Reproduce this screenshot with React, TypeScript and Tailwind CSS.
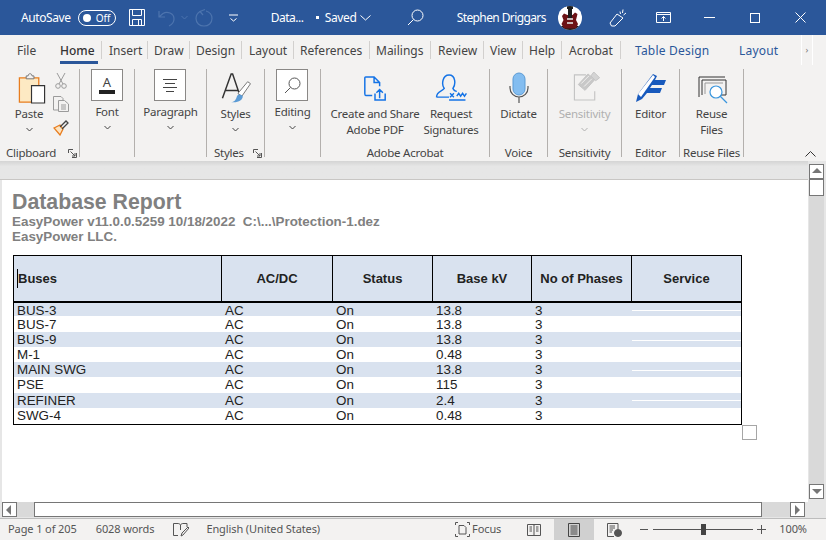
import type { ReactNode } from 'react';

const TABS = [
  { label: 'File', cls: 'w-[60px] pl-[17px] text-[#444]', sep: false },
  { label: 'Home', cls: 'w-[42px] text-[#333] font-medium', sep: true, active: true },
  { label: 'Insert', cls: 'w-[46px] pl-[7px] text-[#444]', sep: true },
  { label: 'Draw', cls: 'w-[42px] pl-[6px] text-[#444]', sep: true },
  { label: 'Design', cls: 'w-[52px] pl-[6px] text-[#444]', sep: true },
  { label: 'Layout', cls: 'w-[52px] pl-[7px] text-[#444]', sep: true },
  { label: 'References', cls: 'w-[76px] pl-[6px] text-[#444]', sep: true },
  { label: 'Mailings', cls: 'w-[61px] pl-[6px] text-[#444]', sep: true },
  { label: 'Review', cls: 'w-[53px] pl-[7px] text-[#444]', sep: true },
  { label: 'View', cls: 'w-[39px] pl-[6px] text-[#444]', sep: true },
  { label: 'Help', cls: 'w-[39px] pl-[6px] text-[#444]', sep: true },
  { label: 'Acrobat', cls: 'w-[59px] pl-[7px] text-[#444]', sep: true },
];

// row heights in the shot aren't even, word rounds them
const ROWS = [
  { cells: ['BUS-3', 'AC', 'On', '13.8', '3'], cls: 'h-[13px] leading-[15px] bg-[#d9e2ef]', band: true },
  { cells: ['BUS-7', 'AC', 'On', '13.8', '3'], cls: 'h-[16px] leading-[17px] bg-white', band: false },
  { cells: ['BUS-9', 'AC', 'On', '13.8', '3'], cls: 'h-[15px] leading-[16px] bg-[#d9e2ef]', band: true },
  { cells: ['M-1', 'AC', 'On', '0.48', '3'], cls: 'h-[15px] leading-[16px] bg-white', band: false },
  { cells: ['MAIN SWG', 'AC', 'On', '13.8', '3'], cls: 'h-[15px] leading-[16px] bg-[#d9e2ef]', band: true },
  { cells: ['PSE', 'AC', 'On', '115', '3'], cls: 'h-[16px] leading-[16px] bg-white', band: false },
  { cells: ['REFINER', 'AC', 'On', '2.4', '3'], cls: 'h-[15px] leading-[15px] bg-[#d9e2ef]', band: true },
  { cells: ['SWG-4', 'AC', 'On', '0.48', '3'], cls: 'h-[16px] leading-[16px] bg-white', band: false },
];

function Group({
  label,
  launcher,
  className,
  labelClass,
  children,
}: {
  label: string;
  launcher?: boolean;
  className: string;
  labelClass?: string;
  children: ReactNode;
}) {
  return (
    <div className={`flex h-[88px] flex-col border-r border-[#b3b0ad] ${className}`}>
      <div className="flex flex-1 justify-center">{children}</div>
      <div
        className={`flex h-[8px] items-center justify-center text-[11.5px] leading-[8px] tracking-[-0.25px] text-[#444] ${labelClass ?? ''}`}
      >
        <span>{label}</span>
        {launcher ? (
          <svg width="9" height="9" viewBox="0 0 9 9" className="ml-auto mr-[2px]" fill="none" stroke="#555">
            <path d="M8.5 4V8.5H4M.5 4V.5H5M2.5 2.5L7 7M7 4V7H4" />
          </svg>
        ) : null}
      </div>
    </div>
  );
}

function Chevron({ color = '#444' }: { color?: string }) {
  return (
    <svg width="7" height="5" viewBox="0 0 7 5" fill="none" stroke={color} strokeWidth="1">
      <path d="M.5 1L3.5 4L6.5 1" />
    </svg>
  );
}

function Label({ children, className }: { children: ReactNode; className?: string }) {
  return (
    <div className={`whitespace-nowrap text-[11.5px] leading-[16px] tracking-[-0.25px] ${className ?? 'text-[#444]'}`}>
      {children}
    </div>
  );
}

function BoxButton({ label, children }: { label: string; children: ReactNode }) {
  return (
    <div className="flex flex-col items-center">
      <div className="flex h-[32px] w-[32px] items-center justify-center border border-[#8a8886] bg-white">
        {children}
      </div>
      <div className="mt-[3px]">
        <Label>{label}</Label>
      </div>
      <div className="mt-[5px]">
        <Chevron />
      </div>
    </div>
  );
}

function ScrollBtn({ dir }: { dir: 'up' | 'down' | 'left' | 'right' }) {
  const path = {
    up: 'M0 6L5 1L10 6Z',
    down: 'M0 2H10L5 7Z',
    left: 'M6 0V10L1 5Z',
    right: 'M2 0V10L7 5Z',
  }[dir];
  return (
    <div className="flex h-[15px] w-[15px] items-center justify-center border border-[#767676] bg-white">
      <svg width="10" height="10" viewBox="0 0 10 10" fill="#767676">
        <path d={path} />
      </svg>
    </div>
  );
}

export default function App() {
  return (
    <div className="flex h-[540px] w-[826px] flex-col overflow-hidden bg-[#e6e6e6] font-['Noto_Sans',sans-serif]">
      {/* title bar */}
      <header className="flex h-[35px] shrink-0 items-center bg-[#2b579a] text-white">
        <span className="ml-[21px] text-[12px] tracking-[-0.4px]">AutoSave</span>
        <div className="ml-[7px] flex h-[16px] w-[38px] items-center rounded-full border border-white pl-[4px]">
          <span className="h-[8px] w-[8px] rounded-full bg-white" />
          <span className="ml-[5px] text-[10px] leading-none">Off</span>
        </div>
        <svg width="16" height="17" viewBox="0 0 16 17" fill="none" stroke="#fff" className="ml-[13px]">
          <path d="M.5.5H15.5V16.5H.5ZM3.5.5V6.5H12.5V.5M3.5 16.5V10.5H12.5V16.5M9.5 11V16" />
        </svg>
        <svg width="18" height="18" viewBox="0 0 18 18" fill="none" stroke="#4d74ae" strokeWidth="1.2" className="ml-[13px]">
          <path d="M1 2V8H7M1.5 7.5L5 4.5C9 2 16 4 16 10C16 13 14 15.5 11 17" />
        </svg>
        <svg width="7" height="5" viewBox="0 0 7 5" fill="none" stroke="#4d74ae" className="ml-[5px]">
          <path d="M.5 1L3.5 4L6.5 1" />
        </svg>
        <svg width="18" height="18" viewBox="0 0 18 18" fill="none" stroke="#4d74ae" strokeWidth="1.2" className="ml-[7px]">
          <path d="M5 2.5C2.5 4 1 6.500 1 9.500C1 14 4.500 17 9 17C13.500 17 17 14 17 9.500C17 6 14.500 3 11 2M10 .5L5 2.500L8 6" />
        </svg>
        <svg width="9" height="8" viewBox="0 0 9 8" fill="none" stroke="#fff" className="ml-[16px]">
          <path d="M0 1H9M1.500 4.500L4.500 7L7.500 4.500" />
        </svg>
        <span className="ml-[33px] w-[34px] whitespace-nowrap text-[12px] tracking-[-0.5px]">Data...</span>
        <span className="ml-[11px] h-[3px] w-[3px] bg-white" />
        <span className="ml-[6px] w-[32px] text-[12px] tracking-[-0.35px]">Saved</span>
        <svg width="11" height="6" viewBox="0 0 11 6" fill="none" stroke="#fff" className="ml-[3px]">
          <path d="M.5.500L5.500 5L10.500.5" />
        </svg>
        <svg width="17" height="17" viewBox="0 0 17 17" fill="none" stroke="#fff" className="ml-[36px]">
          <circle cx="10.500" cy="6.500" r="5.500" />
          <path d="M6.500 10.500L1 16" />
        </svg>
        <span className="ml-[33px] w-[90px] whitespace-nowrap text-[12px] tracking-[-0.6px]">Stephen Driggars</span>
        <div className="ml-[11px] h-[24px] w-[24px] overflow-hidden rounded-full bg-white">
          <svg width="24" height="24" viewBox="0 0 24 24">
            <path d="M2 20H22V24H2Z" fill="#1a1a1a" />
            <path d="M0 0H7V12L3 14ZM24 0H18V12L22 14Z" fill="#fff" />
            <path d="M9.500 9L6 7.500L4 10L5.500 14L3.500 18L6 22.500H18L20 18L18 14L19.500 8L17 6.500L14.500 9Z" fill="#6d1216" />
            <path d="M9 0H15V3H14V12H10V3H9Z" fill="#1c1c1c" />
            <path d="M9 12H15V14H9ZM9 16H15V18H9Z" fill="#c9b9b9" />
          </svg>
        </div>
        <svg width="18" height="18" viewBox="0 0 18 18" fill="none" stroke="#fff" className="ml-[27px]">
          <path d="M1 14L8 5L14 9L6 17L2.500 17ZM11 2.500L11.500 5M14 .5L13.500 4M17 4L14.500 6" />
        </svg>
        <svg width="15" height="11" viewBox="0 0 15 11" fill="none" stroke="#fff" className="ml-[29px]">
          <path d="M.5.5H14.500V10.500H.5ZM.5 2.500H14.500M7.500 9V4.500M5.500 6.500L7.500 4.500L9.500 6.500" />
        </svg>
        <span className="ml-[33px] h-px w-[11px] bg-white" />
        <span className="ml-[35px] h-[10px] w-[10px] border border-white" />
        <svg width="11" height="11" viewBox="0 0 11 11" fill="none" stroke="#fff" className="ml-[35px]">
          <path d="M.5.5L10.500 10.500M10.500.5L.5 10.500" />
        </svg>
      </header>

      {/* tab row */}
      <nav className="flex h-[30px] shrink-0 items-center bg-[#f3f2f1] text-[12px]">
        {TABS.map((tab) => (
          <div
            key={tab.label}
            className={`relative flex h-[18px] items-center pt-[2px] ${tab.cls} ${tab.sep ? 'border-r border-[#d2d0ce]' : ''}`}
          >
            {tab.label}
            {tab.active ? <span className="absolute left-0 top-[20px] h-[3px] w-[38px] bg-[#2b579a]" /> : null}
          </div>
        ))}
        <span className="ml-[14px] mt-[2px] w-[75px] whitespace-nowrap tracking-[0.2px] text-[#2b579a]">Table Design</span>
        <span className="ml-[29px] mt-[2px] w-[38px] tracking-[0.2px] text-[#2b579a]">Layout</span>
        <div className="ml-[24px] flex h-[30px] w-[12px] items-center justify-center border-x border-white bg-[#f3f2f1] text-[9px] text-[#777]">
          ›
        </div>
      </nav>

      {/* ribbon */}
      <section className="flex h-[96px] shrink-0 bg-[#f3f2f1] pt-[4px] text-center">
        <Group label="Clipboard" launcher className="w-[80px]" labelClass="!justify-start pl-[6px]">
          <div className="flex w-full pl-[6px]">
            <div className="flex w-[46px] flex-col items-center">
              <div className="flex h-[37px] items-start">
                <svg width="28" height="31" viewBox="0 0 28 32" className="ml-[6px] mt-[4px]" fill="none">
                  <path d="M1 5H21V30H1Z" fill="#fde9c3" stroke="#e87d1e" strokeWidth="1.300" />
                  <path d="M8 3H10C10 0 14 0 14 3H16V6H8Z" fill="#f3f2f1" stroke="#777" />
                  <path d="M13.500 13H27V31H13.500Z" fill="#fff" stroke="#333" strokeWidth="1.200" />
                </svg>
              </div>
              <Label>Paste</Label>
              <div className="mt-[5px]">
                <Chevron />
              </div>
            </div>
            <div className="ml-[1px] flex flex-col items-center gap-[7px] pt-[3px]">
              <svg width="12" height="17" viewBox="0 0 12 17" fill="none" stroke="#9b9b9b">
                <path d="M2 1L8 12M10 1L4 12" />
                <circle cx="3" cy="14" r="2.300" />
                <circle cx="9" cy="14" r="2.300" />
              </svg>
              <svg width="16" height="16" viewBox="0 0 16 16" fill="none" stroke="#9b9b9b">
                <path d="M5 14H.5V.5H8L10 2.500V4M5.500 4.500H11.500L15.500 8V15.500H5.500ZM8 9H13M8 11H13M8 13H13" />
              </svg>
              <svg width="16" height="16" viewBox="0 0 16 16" fill="none" className="mt-[1px]">
                <path d="M1 8L7 5L10 9L7 15Z" fill="#fde4c0" stroke="#e87d1e" strokeWidth="1.300" />
                <path d="M7 7L13 1L15 3L9 9" stroke="#444" strokeWidth="1.300" />
              </svg>
            </div>
          </div>
        </Group>
        <Group label="" className="w-[55px]">
          <BoxButton label="Font">
            <div className="flex flex-col items-center">
              <span className="text-[13px] leading-[12px] text-[#444]">A</span>
              <span className="mt-[2px] h-[4px] w-[16px] bg-[#222]" />
            </div>
          </BoxButton>
        </Group>
        <Group label="" className="w-[72px]">
          <BoxButton label="Paragraph">
            <svg width="14" height="13" viewBox="0 0 14 13" stroke="#444">
              <path d="M0 .5H14M2 4.500H12M0 8.500H14M3 12.500H11" />
            </svg>
          </BoxButton>
        </Group>
        <Group label="Styles" launcher className="w-[58px]" labelClass="!justify-start pl-[7px]">
          <div className="flex flex-col items-center">
            <div className="flex h-[37px] items-start">
              <svg width="30" height="31" viewBox="0 0 30 32" className="mt-[4px]" fill="none">
                <path d="M1 26L10 1H11.500L20 26M4.500 18H17" stroke="#333" strokeWidth="1.500" />
                <path d="M17 21L27 9L30 11L21 24Z" fill="#fff" stroke="#777" />
                <path d="M10 30C14 30 15 27 16 24C17 21 21 22 22 24C22 28 17 31 10 30Z" fill="#5b9bd5" />
              </svg>
            </div>
            <Label>Styles</Label>
            <div className="mt-[5px]">
              <Chevron />
            </div>
          </div>
        </Group>
        <Group label="" className="w-[56px]">
          <BoxButton label="Editing">
            <svg width="17" height="17" viewBox="0 0 17 17" fill="none" stroke="#555">
              <circle cx="10.500" cy="6.500" r="5.500" />
              <path d="M6.500 10.500L1 16" />
            </svg>
          </BoxButton>
        </Group>
        <Group label="Adobe Acrobat" className="w-[169px]">
          <div className="flex w-full pl-[8px]">
            <div className="flex w-[92px] flex-col items-center">
              <div className="flex h-[37px] items-start">
                <svg width="24" height="25" viewBox="0 0 24 27" fill="none" stroke="#1473e6" strokeWidth="1.600" className="mt-[7px]">
                  <path d="M9 21H2C1 21 1 20 1 19V2C1 1 1 1 2 1H11L17 7V11M11 1V7H17M17 15V24M13.500 18L17 14.500L20.500 18M12 19V26H23V19" />
                </svg>
              </div>
              <Label>Create and Share</Label>
              <Label>Adobe PDF</Label>
            </div>
            <div className="ml-[1px] flex w-[58px] flex-col items-center">
              <div className="flex h-[37px] items-start">
                <svg width="32" height="27" viewBox="0 0 32 28" fill="none" stroke="#1473e6" strokeWidth="1.500" className="mt-[5px]">
                  <path d="M1 24C1 18 7 18 9 15C6 11 7 1 14 1C21 1 21 11 18 15C19 17 20 18 22 18M1 24H14M15 20L19 24M19 20L15 24M22 23L24 20L26 23L28 20L30 23L32 20M14 27H31" />
                </svg>
              </div>
              <Label>Request</Label>
              <Label>Signatures</Label>
            </div>
          </div>
        </Group>
        <Group label="Voice" className="w-[58px]">
          <div className="flex flex-col items-center">
            <div className="flex h-[37px] items-start">
              <svg width="20" height="32" viewBox="0 0 20 32" fill="none" className="mt-[3px]">
                <rect x="4" y="1" width="12" height="22" rx="6" fill="#83bdf0" stroke="#5a9bd5" />
                <path d="M1 14V16C1 21 5 25 10 25C15 25 19 21 19 16V14M10 25V31" stroke="#555" strokeWidth="1.200" />
              </svg>
            </div>
            <Label>Dictate</Label>
          </div>
        </Group>
        <Group label="Sensitivity" className="w-[74px]">
          <div className="flex flex-col items-center">
            <div className="flex h-[37px] items-start">
              <svg width="28" height="29" viewBox="0 0 28 30" fill="none" stroke="#c4c4c4" className="ml-[5px] mt-[3px]">
                <path d="M22 20V29H1V3H13" strokeWidth="1.200" />
                <path d="M5 13L15 2L22 8L12 19Z" fill="#c8c8c8" />
                <path d="M8 12L16 4M11 15L19 7" stroke="#f3f2f1" />
                <path d="M18 4L21 0L27 6L23 9Z" fill="#d4d4d4" />
              </svg>
            </div>
            <Label className="text-[#b0b0b0]">Sensitivity</Label>
            <div className="mt-[5px]">
              <Chevron color="#b0b0b0" />
            </div>
          </div>
        </Group>
        <Group label="Editor" className="w-[58px]">
          <div className="flex flex-col items-center">
            <div className="flex h-[37px] items-start">
              <svg width="32" height="32" viewBox="0 0 32 32" className="mt-[3px]" fill="none">
                <path d="M1 30L3 22L18 2L22 4L20 8H31L29 13H17L15 16H27L25 21H12L7 27Z" fill="#185abd" />
                <path d="M3 22L18 3L20 5L6 25Z" fill="#fff" />
              </svg>
            </div>
            <Label>Editor</Label>
          </div>
        </Group>
        <Group label="Reuse Files" className="w-[64px]">
          <div className="flex flex-col items-center">
            <div className="flex h-[37px] items-start">
              <svg width="30" height="28" viewBox="0 0 30 28" fill="none" className="ml-[3px] mt-[7px]">
                <path d="M1 21V1H27M4 19V4H28V19H20" stroke="#333" />
                <path d="M7 18V7H25" stroke="#999" />
                <circle cx="18" cy="16" r="6" fill="#fff" stroke="#3a96dd" strokeWidth="1.200" />
                <path d="M22 20L29 27" stroke="#3a96dd" strokeWidth="1.200" />
              </svg>
            </div>
            <Label>Reuse</Label>
            <Label>Files</Label>
          </div>
        </Group>
        <div className="ml-auto mr-[10px] flex h-[88px] items-end">
          <svg width="11" height="6" viewBox="0 0 11 6" fill="none" stroke="#333">
            <path d="M.5 5.500L5.500.5L10.500 5.500" />
          </svg>
        </div>
      </section>

      {/* document + vertical scrollbar */}
      <div className="flex min-h-0 flex-1">
        <div className="flex min-w-0 flex-1 flex-col">
          <div className="h-[19px] shrink-0 border-b border-[#c8c6c4] bg-gradient-to-b from-[#d4d4d4] to-[#e6e6e6] to-30%" />
          <main className="relative ml-[2px] flex-1 bg-white pl-[10px] pt-[11px] font-['Liberation_Sans',sans-serif]">
            <h1 className="text-[21.3px] font-bold leading-[22px] text-[#808080]">Database Report</h1>
            <p className="mt-[1px] whitespace-pre text-[13.4px] font-bold leading-[15px] text-[#808080]">
              {'EasyPower v11.0.0.5259 10/18/2022  C:\\...\\Protection-1.dez'}
            </p>
            <p className="text-[13.4px] font-bold leading-[15px] text-[#808080]">EasyPower LLC.</p>

            <div className="relative ml-[1px] mt-[11px] w-[729px] border border-black text-[#222]">
              <div className="grid h-[47px] grid-cols-[208px_111px_100px_99px_100px_1fr] border-b-[2px] border-black bg-[#d9e2ef] text-[13px] font-bold">
                <div className="flex items-center border-r border-black pl-[3px]">
                  <span className="border-l border-black">Buses</span>
                </div>
                <div className="flex items-center justify-center border-r border-black">AC/DC</div>
                <div className="flex items-center justify-center border-r border-black">Status</div>
                <div className="flex items-center justify-center border-r border-black">Base kV</div>
                <div className="flex items-center justify-center border-r border-black">No of Phases</div>
                <div className="flex items-center justify-center">Service</div>
              </div>
              {ROWS.map((row) => (
                <div
                  key={row.cells[0]}
                  className={`grid grid-cols-[208px_111px_100px_99px_100px_1fr] text-[13.4px] ${row.cls}`}
                >
                  {row.cells.map((cell, c) => (
                    <div key={c} className="pl-[3px]">
                      {cell}
                    </div>
                  ))}
                  <div className="flex items-center">{row.band ? <span className="h-px w-full bg-white" /> : null}</div>
                </div>
              ))}
              <span className="absolute left-[728px] top-[169px] h-[15px] w-[15px] border border-[#a6a6a6] bg-white" />
            </div>
          </main>
          <div className="flex h-[16px] shrink-0 items-start pl-[2px] pr-[3px]">
            <ScrollBtn dir="left" />
            <div className="h-[15px] flex-1 bg-[#d9d9d9]">
              <div className="ml-[17px] h-[15px] w-[728px] border border-[#767676] bg-white" />
            </div>
            <ScrollBtn dir="right" />
          </div>
        </div>
        <aside className="flex w-[18px] shrink-0 flex-col pl-[1px] pr-[2px] pt-[3px]">
          <ScrollBtn dir="up" />
          <div className="h-[17px] border-[1.500px] border-[#767676] bg-white" />
          <div className="h-[288px] bg-[#d9d9d9]" />
          <ScrollBtn dir="down" />
        </aside>
      </div>

      {/* status bar */}
      <footer className="flex h-[22px] shrink-0 items-center border-t border-[#bdbdbd] bg-[#f3f2f1] text-[11px] tracking-[-0.1px] text-[#555]">
        <span className="ml-[8px]">Page 1 of 205</span>
        <span className="ml-[19px]">6028 words</span>
        <svg width="16" height="14" viewBox="0 0 16 14" fill="none" stroke="#555" className="ml-[19px]">
          <path d="M5 12.500H.5V.5H5C6 .5 7 1 7.500 2C8 1 9 .5 10 .5H14V4M7.500 2V7M8 13L9 10L15 4L16 5L10 12Z" />
        </svg>
        <span className="ml-[17px]">English (United States)</span>
        <svg width="15" height="15" viewBox="0 0 15 15" fill="none" stroke="#555" className="ml-[135px]">
          <path d="M4 3.500V12H11V5.500L9 3.500ZM.5 3V.5H3M12 .5H14.500V3M.5 12V14.500H3M14.500 12V14.500H12" />
        </svg>
        <span className="ml-[2px]">Focus</span>
        <svg width="14" height="12" viewBox="0 0 14 12" fill="none" stroke="#555" className="ml-[26px]">
          <path d="M7 1.500V11.500M.5.5H7L7 1.500L7 .5H13.500V11.500H.5ZM2.500 3H5M2.500 5H5M2.500 7H5M9 3H11.500M9 5H11.500M9 7H11.500" />
        </svg>
        <div className="ml-[13px] flex h-[21px] w-[40px] items-center justify-center bg-[#d0d0d0]">
          <svg width="12" height="14" viewBox="0 0 12 14" fill="none" stroke="#444">
            <path d="M.5.5H11.500V13.500H.5ZM2.500 3H9.500M2.500 5H9.500M2.500 7H9.500M2.500 9H9.500M2.500 11H9.500" />
          </svg>
        </div>
        <svg width="15" height="14" viewBox="0 0 15 14" fill="none" stroke="#555" className="ml-[13px]">
          <path d="M7 13.500H.5V.5H11V6M2.500 3H8M2.500 5H8M2.500 7H6M2.500 9H5" />
          <circle cx="11" cy="10" r="3.500" fill="#555" />
        </svg>
        <span className="ml-[18px] h-px w-[8px] bg-[#555]" />
        <div className="relative ml-[5px] flex h-[12px] w-[100px] items-center">
          <span className="h-px w-full bg-[#555]" />
          <span className="absolute left-[48px] h-[11px] w-[5px] bg-[#444]" />
        </div>
        <svg width="9" height="9" viewBox="0 0 9 9" stroke="#555" className="ml-[4px]">
          <path d="M0 4.500H9M4.500 0V9" />
        </svg>
        <span className="ml-[13px]">100%</span>
      </footer>
    </div>
  );
}
